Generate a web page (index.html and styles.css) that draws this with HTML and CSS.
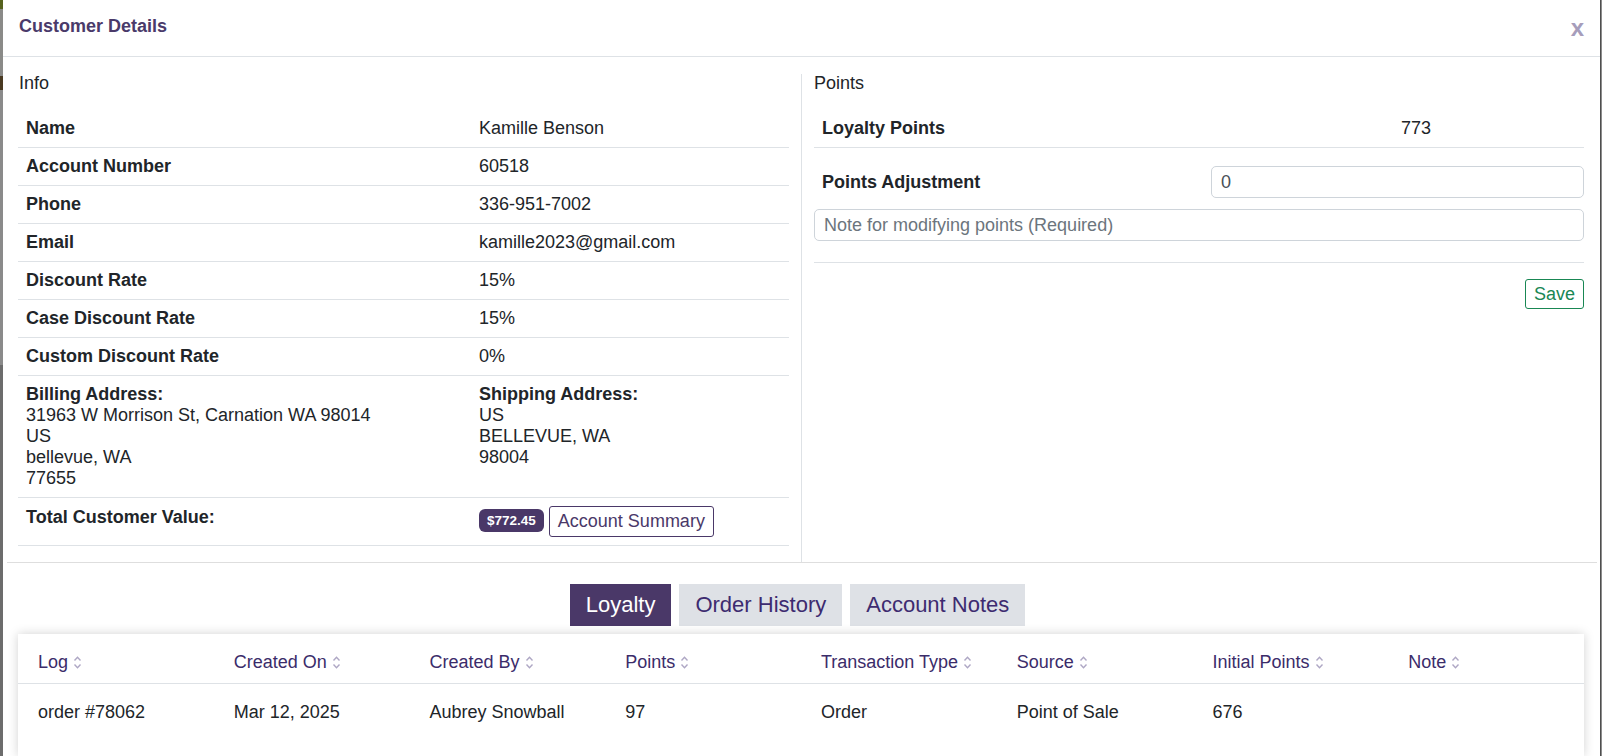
FILE: index.html
```html
<!DOCTYPE html>
<html>
<head>
<meta charset="utf-8">
<link rel="stylesheet" href="styles.css">
</head>
<body>
<div class="page">
  <div class="strip-left"></div>
  <div class="modal">
    <div class="modal-header">
      <div class="title">Customer Details</div>
      <div class="close">x</div>
    </div>
    <div class="columns">
      <div class="col col-left">
        <div class="section-label">Info</div>
        <table class="info">
          <tr><td class="lbl">Name</td><td>Kamille Benson</td></tr>
          <tr><td class="lbl">Account Number</td><td>60518</td></tr>
          <tr><td class="lbl">Phone</td><td>336-951-7002</td></tr>
          <tr><td class="lbl">Email</td><td>kamille2023@gmail.com</td></tr>
          <tr><td class="lbl">Discount Rate</td><td>15%</td></tr>
          <tr><td class="lbl">Case Discount Rate</td><td>15%</td></tr>
          <tr><td class="lbl">Custom Discount Rate</td><td>0%</td></tr>
          <tr class="addr">
            <td><b>Billing Address:</b><br>31963 W Morrison St, Carnation WA 98014<br>US<br>bellevue, WA<br>77655</td>
            <td><b>Shipping Address:</b><br>US<br>BELLEVUE, WA<br>98004</td>
          </tr>
          <tr class="total"><td class="lbl">Total Customer Value:</td><td class="total-val"><span class="badge">$772.45</span> <button class="btn-outline">Account Summary</button></td></tr>
        </table>
      </div>
      <div class="col col-right">
        <div class="section-label">Points</div>
        <table class="points">
          <tr><td class="lbl">Loyalty Points</td><td>773</td></tr>
        </table>
        <div class="adjust-row">
          <div class="lbl adj-label">Points Adjustment</div>
          <input class="field" type="text" value="0">
        </div>
        <input class="field note" type="text" placeholder="Note for modifying points (Required)">
        <div class="rule"></div>
        <div class="save-row"><button class="btn-save">Save</button></div>
      </div>
    </div>
    <div class="divider"></div>
    <div class="tabs">
      <div class="tab active">Loyalty</div>
      <div class="tab">Order History</div>
      <div class="tab">Account Notes</div>
    </div>
    <div class="card">
      <table class="log">
        <thead>
          <tr>
            <th>Log<svg class="sort" viewBox="0 0 8 14"><path d="M1.2 5.2 L4 2.2 L6.8 5.2 M1.2 8.8 L4 11.8 L6.8 8.8"/></svg></th>
            <th>Created On<svg class="sort" viewBox="0 0 8 14"><path d="M1.2 5.2 L4 2.2 L6.8 5.2 M1.2 8.8 L4 11.8 L6.8 8.8"/></svg></th>
            <th>Created By<svg class="sort" viewBox="0 0 8 14"><path d="M1.2 5.2 L4 2.2 L6.8 5.2 M1.2 8.8 L4 11.8 L6.8 8.8"/></svg></th>
            <th>Points<svg class="sort" viewBox="0 0 8 14"><path d="M1.2 5.2 L4 2.2 L6.8 5.2 M1.2 8.8 L4 11.8 L6.8 8.8"/></svg></th>
            <th>Transaction Type<svg class="sort" viewBox="0 0 8 14"><path d="M1.2 5.2 L4 2.2 L6.8 5.2 M1.2 8.8 L4 11.8 L6.8 8.8"/></svg></th>
            <th>Source<svg class="sort" viewBox="0 0 8 14"><path d="M1.2 5.2 L4 2.2 L6.8 5.2 M1.2 8.8 L4 11.8 L6.8 8.8"/></svg></th>
            <th>Initial Points<svg class="sort" viewBox="0 0 8 14"><path d="M1.2 5.2 L4 2.2 L6.8 5.2 M1.2 8.8 L4 11.8 L6.8 8.8"/></svg></th>
            <th>Note<svg class="sort" viewBox="0 0 8 14"><path d="M1.2 5.2 L4 2.2 L6.8 5.2 M1.2 8.8 L4 11.8 L6.8 8.8"/></svg></th>
          </tr>
        </thead>
        <tbody>
          <tr>
            <td>order #78062</td>
            <td>Mar 12, 2025</td>
            <td>Aubrey Snowball</td>
            <td>97</td>
            <td>Order</td>
            <td>Point of Sale</td>
            <td>676</td>
            <td></td>
          </tr>
        </tbody>
      </table>
    </div>
  </div>
  <div class="strip-right"></div>
</div>
</body>
</html>
```

FILE: styles.css
```css
* { box-sizing: border-box; }
html, body { margin: 0; padding: 0; }
body {
  font-family: "Liberation Sans", Arial, sans-serif;
  font-size: 18px;
  color: #212529;
  background: #777;
}
.page {
  display: flex;
  height: 756px;
  overflow: hidden;
}
.strip-left {
  width: 3px;
  flex: none;
  background: linear-gradient(to bottom, #56621e 0 9px, #8a8a88 9px 76px, #4a3a22 76px 90px, #8a8a8a 90px 365px, #6c6c6c 365px);
}
.strip-right {
  width: 2px;
  flex: none;
  background: linear-gradient(to right, #4e4e4e 0 1px, #8c8c8c 1px);
}
.modal {
  flex: 1;
  background: #fff;
  display: flex;
  flex-direction: column;
}
.modal-header {
  height: 57px;
  flex: none;
  border-bottom: 1px solid #dee2e6;
  display: flex;
  align-items: center;
  justify-content: space-between;
  padding: 0 16px 4px 16px;
}
.title {
  font-size: 18px;
  font-weight: bold;
  color: #4a3a6a;
}
.close {
  font-size: 24px;
  font-weight: bold;
  color: #a69dbb;
  line-height: 1;
  padding-top: 3px;
}
.columns {
  display: flex;
  margin-top: 17px;
}
.col-left {
  width: 798px;
  flex: none;
  padding: 0 12px 16px 15px;
}
.col-right {
  flex: 1;
  border-left: 1px solid #dee2e6;
  padding: 0 16px 0 12px;
}
.section-label {
  line-height: 18px;
  margin-bottom: 18px;
}
.col-left .section-label { padding-left: 1px; }
table { border-collapse: collapse; }
.info, .points { width: 100%; }
.info td, .points td {
  padding: 8px 8px;
  line-height: 21px;
  border-bottom: 1px solid #dee2e6;
  vertical-align: top;
}
.info td:first-child { width: 453px; }
.points td:first-child { width: 579px; }
.lbl { font-weight: bold; }
.info tr.total td.lbl { padding-top: 9px; padding-bottom: 7px; }
.info tr.total td.total-val { padding-top: 8px; padding-bottom: 8px; }
.badge {
  display: inline-block;
  vertical-align: middle;
  background: #4a3868;
  color: #fff;
  font-weight: bold;
  font-size: 13.5px;
  line-height: 1;
  padding: 5px 8px 5px 8px;
  border-radius: 6px;
  position: relative;
  top: -1px;
}
.btn-outline {
  display: inline-block;
  vertical-align: middle;
  font-family: inherit;
  font-size: 18px;
  line-height: 21px;
  color: #4a3868;
  background: #fff;
  border: 1px solid #4a3868;
  border-radius: 3px;
  padding: 4px 8px;
  margin: 0;
}
.adjust-row {
  display: grid;
  grid-template-columns: 397px 1fr;
  align-items: center;
  margin-top: 18px;
}
.adj-label { padding-left: 8px; }
.field {
  display: block;
  width: 100%;
  height: 32px;
  font-family: inherit;
  font-size: 18px;
  color: #495057;
  border: 1px solid #ced4da;
  border-radius: 5px;
  padding: 0 9px;
  margin: 0;
  background: #fff;
}
.field::placeholder { color: #6c757d; }
.note { margin-top: 11px; }
.rule {
  border-top: 1px solid #dee2e6;
  margin-top: 21px;
}
.save-row {
  display: flex;
  justify-content: flex-end;
  margin-top: 16px;
}
.btn-save {
  font-family: inherit;
  font-size: 18px;
  line-height: 20px;
  color: #198754;
  background: #fff;
  border: 1px solid #198754;
  border-radius: 3px;
  padding: 4px 8px;
  margin: 0;
}
.divider {
  border-top: 1px solid #dedede;
  margin: 0 3px 0 4px;
}
.tabs {
  display: flex;
  justify-content: center;
  gap: 8px;
  margin-top: 21px;
  padding-right: 8px;
}
.tab {
  font-size: 22px;
  line-height: 26px;
  padding: 8px 16px;
  background: #dee1e6;
  color: #3d2b70;
}
.tab.active {
  background: #4a3868;
  color: #fff;
}
.card {
  margin: 8px 16px 0 15px;
  background: #fff;
  box-shadow: 0 0 10px rgba(0, 0, 0, 0.18);
  flex: 1;
  padding-top: 4px;
}
.log {
  width: 100%;
  table-layout: fixed;
}
.log th {
  text-align: left;
  font-weight: normal;
  color: #3b2c6a;
  padding: 14px 20px 10px 20px;
  line-height: 21px;
  border-bottom: 1px solid #dee2e6;
  white-space: nowrap;
}
.log td {
  padding: 18px 20px;
  line-height: 21px;
}
.sort {
  width: 9px;
  height: 15px;
  margin-left: 5px;
  vertical-align: -2px;
}
.sort path {
  fill: none;
  stroke: #aea7c4;
  stroke-width: 1.3;
}
```
